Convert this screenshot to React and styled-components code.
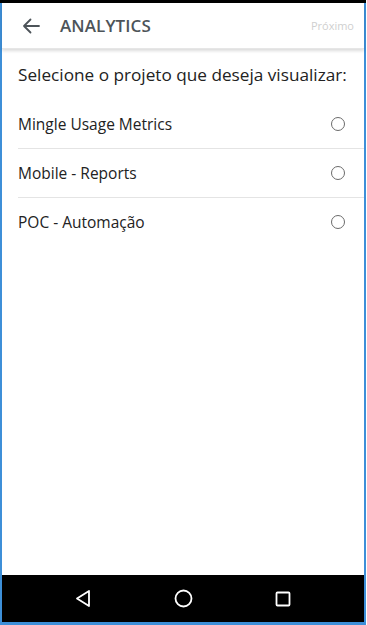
import styled, { createGlobalStyle } from "styled-components";

const GlobalStyle = createGlobalStyle`
  html, body {
    margin: 0;
    padding: 0;
    background: #ffffff;
  }
  body {
    font-family: "Open Sans", "Noto Sans", sans-serif;
  }
`;

const projects = ["Mingle Usage Metrics", "Mobile - Reports", "POC - Automação"];

export default function App() {
  return (
    <>
      <GlobalStyle />
      <Frame>
        <StatusStrip />
        <Header>
          <BackButton aria-label="voltar">
            <svg width="18" height="16" viewBox="0 0 18 16" fill="none">
              <path
                d="M17 8H2M8.5 1.5L2 8l6.5 6.5"
                stroke="#4d5459"
                strokeWidth="1.8"
                strokeLinecap="round"
                strokeLinejoin="round"
              />
            </svg>
          </BackButton>
          <Title>ANALYTICS</Title>
          <NextLink>Próximo</NextLink>
        </Header>
        <Content>
          <Question>Selecione o projeto que deseja visualizar:</Question>
          <List>
            {projects.map((p) => (
              <Row key={p}>
                <RowLabel>{p}</RowLabel>
                <Radio />
              </Row>
            ))}
          </List>
        </Content>
        <NavBar>
          <NavSlot>
            <svg width="16" height="19" viewBox="0 0 16 19" fill="none">
              <path d="M14 2L2 9.5 14 17z" stroke="#fff" strokeWidth="1.8" strokeLinejoin="round" />
            </svg>
          </NavSlot>
          <NavSlot>
            <svg width="19" height="19" viewBox="0 0 19 19" fill="none">
              <circle cx="9.5" cy="9.5" r="8" stroke="#fff" strokeWidth="1.8" />
            </svg>
          </NavSlot>
          <NavSlot>
            <svg width="16" height="16" viewBox="0 0 16 16" fill="none">
              <rect x="1.5" y="1.5" width="13" height="13" rx="1" stroke="#fff" strokeWidth="1.8" />
            </svg>
          </NavSlot>
        </NavBar>
      </Frame>
    </>
  );
}

const Frame = styled.div`
  width: 366px;
  height: 625px;
  box-sizing: border-box;
  border-left: 2px solid #3d8fd8;
  border-right: 2px solid #3d8fd8;
  border-bottom: 3px solid #3d8fd8;
  display: flex;
  flex-direction: column;
  background: #ffffff;
`;

const StatusStrip = styled.div`
  height: 3px;
  background: #000;
  margin-left: -2px;
  margin-right: -2px;
`;

const Header = styled.div`
  height: 45px;
  display: flex;
  align-items: center;
  padding: 0 10px 0 20px;
  box-shadow: 0 2px 3px rgba(0, 0, 0, 0.14);
  border-bottom: 1px solid #e6e6e6;
  position: relative;
  z-index: 1;
`;

const BackButton = styled.div`
  display: flex;
  align-items: center;
  width: 38px;
`;

const Title = styled.div`
  flex: 1;
  font-size: 17px;
  font-weight: 600;
  color: #4d5459;
  letter-spacing: 0.1px;
`;

const NextLink = styled.div`
  font-size: 11px;
  color: #cfcfcf;
`;

const Content = styled.div`
  flex: 1;
  padding-top: 14px;
`;

const Question = styled.div`
  padding-left: 16px;
  font-size: 17.2px;
  color: #222;
  line-height: 24px;
  margin-bottom: 13px;
`;

const List = styled.div`
  margin-left: 16px;
`;

const Row = styled.div`
  height: 48px;
  display: flex;
  align-items: center;
  justify-content: space-between;
  padding-right: 19px;
  border-bottom: 1px solid #e4e4e4;
  &:last-child {
    border-bottom: none;
  }
`;

const RowLabel = styled.span`
  font-size: 15.5px;
  color: #222;
`;

const Radio = styled.span`
  width: 12px;
  height: 12px;
  border-radius: 50%;
  border: 1.8px solid #6b6b6b;
`;

const NavBar = styled.div`
  height: 47px;
  background: #000;
  display: grid;
  grid-template-columns: repeat(3, 100px);
  justify-content: center;
  align-items: center;
`;

const NavSlot = styled.div`
  display: flex;
  justify-content: center;
  align-items: center;
`;
